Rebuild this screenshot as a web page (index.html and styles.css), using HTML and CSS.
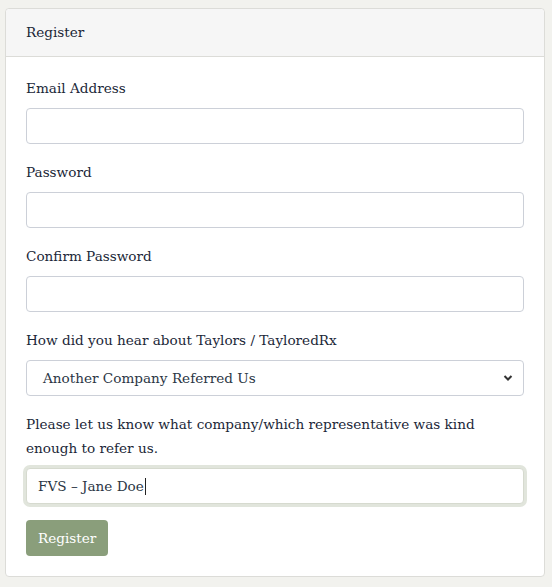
FILE: index.html
```html
<!DOCTYPE html>
<html>
<head>
<meta charset="utf-8">
<link rel="stylesheet" href="styles.css">
</head>
<body>
<div class="card">
  <div class="card-header">Register</div>
  <div class="card-body">
    <div class="group">
      <label class="label">Email Address</label>
      <div class="input"></div>
    </div>
    <div class="group">
      <label class="label">Password</label>
      <div class="input"></div>
    </div>
    <div class="group">
      <label class="label">Confirm Password</label>
      <div class="input"></div>
    </div>
    <div class="group">
      <label class="label">How did you hear about Taylors / TayloredRx</label>
      <div class="input select">
        <span>Another Company Referred Us</span>
        <svg class="chev" width="10" height="8" viewBox="0 0 10 8"><path d="M1.5 2 L5 5.5 L8.5 2" fill="none" stroke="#333" stroke-width="2"/></svg>
      </div>
    </div>
    <div class="group">
      <label class="label">Please let us know what company/which representative was kind enough to refer us.</label>
      <div class="input focus"><span>FVS – Jane Doe</span><span class="caret"></span></div>
    </div>
    <div class="btn">Register</div>
  </div>
</div>
</body>
</html>
```
FILE: styles.css
```css
html, body {
  margin: 0;
  padding: 0;
}
body {
  background: #f2f2ee;
  font-family: "DejaVu Serif", serif;
  font-size: 13.6px;
  color: #1b2738;
  padding: 8px 7px 9px 5px;
}
.card {
  background: #fff;
  border: 1px solid #dcdcd8;
  border-radius: 4px;
}
.card-header {
  background: #f6f6f6;
  border-bottom: 1px solid #dcdcd8;
  height: 48px;
  box-sizing: border-box;
  padding: 13px 20px 0;
  line-height: 20px;
  border-radius: 4px 4px 0 0;
}
.card-body {
  padding: 19px 20px 20px 20px;
}
.group {
  margin-bottom: 16px;
}
.label {
  display: block;
  line-height: 24px;
  margin-bottom: 8px;
}
.input {
  height: 36px;
  box-sizing: border-box;
  border: 1px solid #ccd0d8;
  border-radius: 4px;
  background: #fff;
  display: flex;
  align-items: center;
  padding: 0 11px;
}
.select {
  padding: 0 8px 0 16px;
  justify-content: space-between;
  color: #2b3645;
}
.chev {
  margin-right: 2px;
}
.focus {
  border-color: #d6dacf;
  box-shadow: 0 0 0 3px #e1e5dc;
  color: #2b3645;
}
.caret {
  width: 1px;
  height: 17px;
  background: #222;
  margin-left: 1px;
}
.btn {
  display: inline-block;
  background: #8a9e7b;
  color: #fff;
  border-radius: 4px;
  height: 36px;
  line-height: 36px;
  padding: 0 12px;
  box-sizing: border-box;
}
```
